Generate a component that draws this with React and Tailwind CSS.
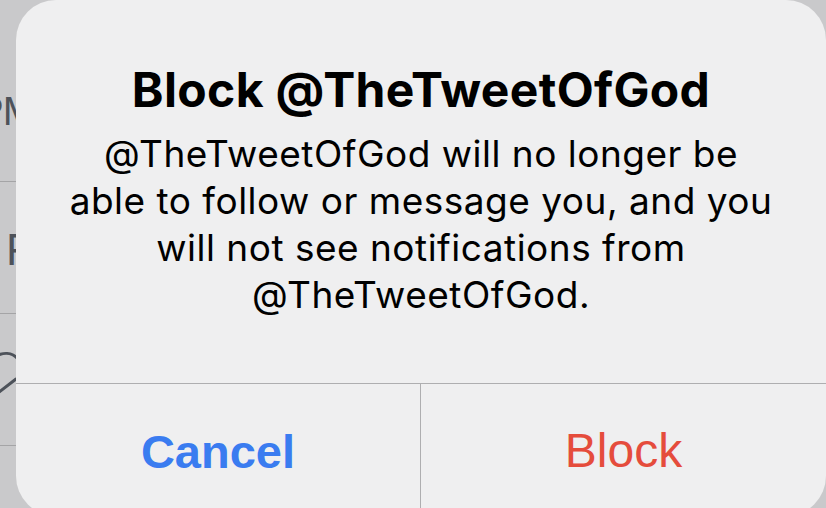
export default function App() {
  return (
    <div className="relative w-[826px] h-[508px] overflow-hidden bg-[#c9c9cb]" style={{ fontFamily: '"Liberation Sans", Arial, sans-serif' }}>
      {/* background list (mostly hidden under the alert) */}
      <div className="flex flex-col text-[#4d525a]">
        <div className="h-[182px] border-b border-[#a4a4a6] flex items-center">
          <span className="ml-[-23px] mt-[40px] text-[40px] leading-none tracking-[-1px]">PM</span>
        </div>
        <div className="h-[132px] border-b border-[#a4a4a6] flex items-center">
          <span className="ml-[6px] mt-[5px] text-[44px] leading-none">F</span>
        </div>
        <div className="h-[132px] border-b border-[#a4a4a6] flex items-center">
          <svg width="30" height="60" viewBox="0 0 30 60" className="ml-[-6px] mt-[-6px]">
            <path d="M24 12 C 18 5, 9 5, 0 10" fill="none" stroke="#4d525a" strokeWidth="3" strokeLinecap="round" />
            <path d="M22 32 L 4 46" fill="none" stroke="#4d525a" strokeWidth="3" strokeLinecap="round" />
          </svg>
        </div>
        <div className="flex-1" />
      </div>

      {/* alert */}
      <div className="absolute left-[16px] top-0 w-[810px] h-[516px] rounded-[40px] bg-[#efeff0] flex flex-col">
        <div className="h-[384px] shrink-0 border-b border-[#aeaeb0] pt-[63px] flex flex-col items-center text-black" style={{ fontFamily: 'Inter, "Liberation Sans", sans-serif' }}>
          <div className="text-[48px] leading-[54px] font-bold tracking-[0.35px] whitespace-nowrap">Block @TheTweetOfGod</div>
          <div className="mt-[13px] text-[37px] leading-[47px] tracking-[0.5px] text-center whitespace-nowrap">
            @TheTweetOfGod will no longer be<br />
            able to follow or message you, and you<br />
            will not see notifications from<br />
            @TheTweetOfGod.
          </div>
        </div>
        <div className="flex-1 flex">
          <div className="w-[405px] border-r border-[#aeaeb0] flex items-center justify-center pt-[2px]">
            <span className="text-[47px] font-bold text-[#3a7cf0] leading-none">Cancel</span>
          </div>
          <div className="flex-1 flex items-center justify-center pt-[2px]">
            <span className="text-[48px] text-[#e54c3c] leading-none">Block</span>
          </div>
        </div>
      </div>
    </div>
  );
}
